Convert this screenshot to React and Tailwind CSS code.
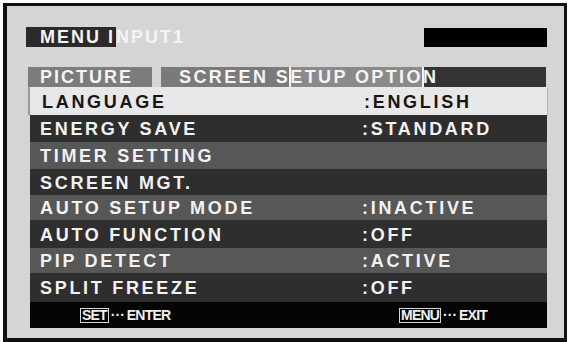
import React from 'react';

const rows = [
  { label: 'LANGUAGE', value: ':ENGLISH', h: 'h-[28px]', tone: 'selected' },
  { label: 'ENERGY SAVE', value: ':STANDARD', h: 'h-[27px]', tone: 'dark' },
  { label: 'TIMER SETTING', value: '', h: 'h-[27px]', tone: 'mid' },
  { label: 'SCREEN MGT.', value: '', h: 'h-[26px]', tone: 'dark' },
  { label: 'AUTO SETUP MODE', value: ':INACTIVE', h: 'h-[25px]', tone: 'mid' },
  { label: 'AUTO FUNCTION', value: ':OFF', h: 'h-[28px]', tone: 'dark' },
  { label: 'PIP DETECT', value: ':ACTIVE', h: 'h-[25px]', tone: 'mid' },
  { label: 'SPLIT FREEZE', value: ':OFF', h: 'h-[29px]', tone: 'dark' },
];

const toneClass = {
  selected: 'bg-[#e8e8e8] text-[#161616] ml-[-2px] border-l-2 border-[#9a9a9a] shadow-[1px_1px_0_#b5b5b5]',
  dark: 'bg-[#2e2e2e] text-[#f2f2f2]',
  mid: 'bg-[#575757] text-[#f2f2f2]',
};

function MenuRow({ label, value, h, tone }) {
  return (
    <div className={`${h} ${toneClass[tone]} flex items-center pt-[1px]`}>
      <div className={`${tone === 'selected' ? 'w-[334px] pl-[12px]' : 'w-[332px] pl-[10px]'} tracking-[2.7px]`}>{label}</div>
      <div className="tracking-[2.7px]">{value}</div>
    </div>
  );
}

function KeyHint({ k, action }) {
  return (
    <div className="flex items-center text-[14px] font-bold text-[#f0f0f0] leading-none">
      <span className="border border-[#d8d8d8] px-[1px] h-[15px] flex items-center tracking-[-0.8px]">{k}</span>
      <span className="tracking-[0px] px-[2px]">···</span>
      <span className="tracking-[-0.8px]">{action}</span>
    </div>
  );
}

export default function App() {
  return (
    <div className="w-[571px] h-[342px] bg-white pt-[3px] pl-[3px] font-['Liberation_Sans',Arial,sans-serif] font-bold text-[18px] leading-none">
      <div className="w-[564px] h-[339px] border-[#111] border-t-[3px] border-l-4 border-r-[3px] border-b-4 bg-[#d5d5d5] pt-[21px] pl-[19px] pr-[17px]">
        {/* header */}
        <div className="flex justify-between h-[20px]">
          <div className="flex items-center tracking-[2px]">
            <span className="bg-[#2a2a2a] h-full flex items-center pl-[14px] pr-[1px] text-[#f4f4f4]">MENU I</span>
            <span className="text-[#f4f4f4]">NPUT1</span>
          </div>
          <div className="w-[123px] h-[19px] mt-[1px] bg-black" />
        </div>

        {/* tabs */}
        <div className="flex h-[20px] mt-[20px] ml-[2px] mr-[1px] gap-[9px] text-[#f4f4f4]">
          <div className="w-[124px] bg-[#7c7c7c] flex items-center pl-[12px] tracking-[2px]">PICTURE</div>
          <div className="flex-1 flex items-center pl-[18px] tracking-[2.4px] bg-[linear-gradient(to_right,#7a7a7a_0_128px,#f2f2f2_128px_130px,#8a8a8a_130px_261px,#f2f2f2_261px_263px,#333333_263px)]">
            SCREEN SETUP OPTION
          </div>
        </div>

        {/* rows */}
        <div className="ml-[4px]">
          {rows.map((r) => (
            <MenuRow key={r.label} {...r} />
          ))}
          <div className="h-[26px] bg-[#050505] flex items-center pl-[50px] pr-[60px] justify-between">
            <KeyHint k="SET" action="ENTER" />
            <KeyHint k="MENU" action="EXIT" />
          </div>
        </div>
      </div>
    </div>
  );
}
